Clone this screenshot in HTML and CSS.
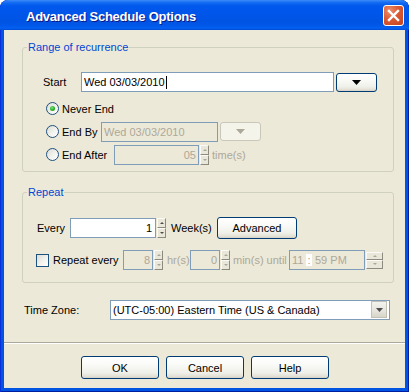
FILE: index.html
```html
<!DOCTYPE html>
<html>
<head>
<meta charset="utf-8">
<title>Advanced Schedule Options</title>
<link rel="stylesheet" href="styles.css">
</head>
<body>
<div class="window">
  <div class="titlebar">
    <span class="title">Advanced Schedule Options</span>
    <span class="close">
      <svg width="19" height="19" viewBox="0 0 19 19"><path d="M5 5 L14 14 M14 5 L5 14" stroke="#fff" stroke-width="2.4" stroke-linecap="square"/></svg>
    </span>
  </div>
  <div class="client">
    <div class="group g1">
      <span class="legend">Range of recurrence</span>
      <div class="row row-start">
        <span class="lbl w-start">Start</span>
        <div class="edit w-date">Wed 03/03/2010<span class="caret"></span></div>
        <button class="btn drop"><svg width="9" height="5" viewBox="0 0 9 5"><polygon points="0,0 9,0 4.5,5" fill="#000"/></svg></button>
      </div>
      <div class="row rrow first">
        <span class="radio checked"></span><span class="rlabel">Never End</span>
      </div>
      <div class="row rrow">
        <span class="radio"></span><span class="rlabel w-endby">End By</span>
        <div class="edit disabled w-enddate">Wed 03/03/2010</div>
        <button class="btn drop disabled"><svg width="9" height="5" viewBox="0 0 9 5"><polygon points="0,0 9,0 4.5,5" fill="#ACA899"/></svg></button>
      </div>
      <div class="row rrow">
        <span class="radio"></span><span class="rlabel w-endafter">End After</span>
        <div class="edit disabled num w-count">05</div>
        <div class="spin off"><span class="up"></span><span class="down"></span></div>
        <span class="dim times">time(s)</span>
      </div>
    </div>

    <div class="group g2">
      <span class="legend">Repeat</span>
      <div class="row row-every">
        <span class="lbl w-every">Every</span>
        <div class="edit num w-weeks">1</div>
        <div class="spin"><span class="up"></span><span class="down"></span></div>
        <span class="lbl w-weeklbl">Week(s)</span>
        <button class="btn push w-adv">Advanced</button>
      </div>
      <div class="row row-rep">
        <span class="check"></span>
        <span class="lbl w-repeat">Repeat every</span>
        <div class="edit disabled num w-small">8</div>
        <div class="spin off"><span class="up"></span><span class="down"></span></div>
        <span class="dim w-hr">hr(s)</span>
        <div class="edit disabled num w-small">0</div>
        <div class="spin off"><span class="up"></span><span class="down"></span></div>
        <span class="dim w-min">min(s) until</span>
        <div class="edit disabled w-time"><span class="t-h">11</span><span class="t-sep">:</span><span>59 PM</span></div>
        <div class="spin off big"><span class="up"></span><span class="down"></span></div>
      </div>
    </div>

    <div class="row row-tz">
      <span class="lbl w-tz">Time Zone:</span>
      <div class="edit w-select">
        <span class="sel-text">(UTC-05:00) Eastern Time (US &amp; Canada)</span>
        <span class="sel-btn"><svg width="7" height="4" viewBox="0 0 7 4"><polygon points="0,0 7,0 3.5,4" fill="#4D4D4D"/></svg></span>
      </div>
    </div>

    <div class="sep"></div>

    <div class="buttons">
      <button class="btn push w-dlg">OK</button>
      <button class="btn push w-dlg">Cancel</button>
      <button class="btn push w-dlg">Help</button>
    </div>
  </div>
</div>
</body>
</html>
```

FILE: styles.css
```css
* { box-sizing: border-box; }
html, body { margin: 0; padding: 0; background: #fff; }
body {
  width: 409px;
  height: 392px;
  font-family: "Liberation Sans", Arial, sans-serif;
  font-size: 11px;
  color: #000;
}

.window {
  width: 409px;
  height: 392px;
  background: #0054E3;
  border-radius: 8px 8px 0 0;
  display: flex;
  flex-direction: column;
  overflow: hidden;
  box-shadow: inset 1px 0 #0831D9, inset -1px 0 #001EA0, inset 0 -1px #001EA0;
}

.titlebar {
  height: 30px;
  flex: none;
  display: flex;
  align-items: center;
  padding: 3px 5px 0 26px;
  background: linear-gradient(180deg, #3E8EF6 0px, #2A7DF6 1px, #1069F0 3px, #0058EE 6px, #0055EA 14px, #0054E3 22px, #0058EA 26px, #0461F2 28px, #004CD6 30px);
  border-radius: 8px 8px 0 0;
}
.title {
  flex: 1;
  color: #fff;
  font-weight: bold;
  font-size: 13px;
  letter-spacing: -0.25px;
  line-height: 15px;
  text-shadow: 1px 1px 0 #0A1883;
}
.close {
  width: 21px;
  height: 21px;
  margin-top: -3px;
  border: 1px solid #fff;
  border-radius: 3px;
  background: radial-gradient(circle at 30% 25%, #EC8E6D 0%, #DA5A34 45%, #C2431F 100%);
  display: flex;
  align-items: center;
  justify-content: center;
}

.client {
  flex: 1;
  margin: 0 4px 4px;
  background: #ECE9D8;
  display: flex;
  flex-direction: column;
}

.group {
  position: relative;
  margin: 0 11px 0 18px;
  border: 1px solid #D0D0BF;
  border-radius: 3px;
}
.g1 { margin-top: 17px; padding-bottom: 7px; }
.g2 { margin-top: 20px; padding-bottom: 12px; }
.legend {
  position: absolute;
  left: 4px;
  top: -7px;
  padding: 0 1px;
  line-height: 13px;
  background: #ECE9D8;
  color: #0046D5;
}

.row { display: flex; align-items: center; }
.lbl, .rlabel, .dim { white-space: nowrap; flex: none; }
.dim { color: #ACA899; }

.row-start { margin-top: 24px; height: 20px; padding-left: 20px; }
.w-start { width: 38px; }
.w-date { width: 253px; }

.rrow { height: 19px; padding-left: 23px; margin-top: 4px; }
.rrow.first { margin-top: 7px; }
.rlabel { margin-left: 3px; }
.w-endby { width: 39px; }
.w-endafter { width: 52px; }
.w-enddate { width: 117px; height: 19px; }
.w-count { width: 85px; height: 19px; }
.times { margin-left: 3px; }

.row-every { margin-top: 24px; height: 22px; padding-left: 14px; }
.w-every { width: 33px; }
.w-weeks { width: 86px; }
.w-weeklbl { width: 46px; margin-left: 5px; }
.w-adv { width: 80px; height: 22px; }

.row-rep { margin-top: 11px; height: 20px; padding-left: 13px; }
.w-repeat { width: 70px; margin-left: 4px; }
.w-small { width: 30px; }
.w-hr { width: 23px; margin-left: 4px; }
.w-min { width: 56px; margin-left: 3px; }
.w-time { width: 76px; height: 18px; padding-left: 3px; }
.t-h { width: 14px; flex: none; }
.t-sep { flex: none; background: #fff; width: 6px; text-align: center; margin-right: 3px; }

.row-tz { margin-top: 17px; height: 19px; padding-left: 20px; }
.w-tz { width: 86px; }
.w-select { width: 280px; height: 19px; padding: 0 1px; }
.sel-text { flex: 1; color: #000; }
.sel-btn {
  width: 16px;
  height: 17px;
  display: flex;
  align-items: center;
  justify-content: center;
  border: 1px solid #C3C1B6;
  background: linear-gradient(180deg, #F3F2EE 0%, #E6E4DC 60%, #D7D4C8 100%);
}

.edit {
  flex: none;
  height: 20px;
  border: 1px solid #7F9DB9;
  background: #fff;
  display: flex;
  align-items: center;
  padding: 0 2px;
  white-space: nowrap;
}
.edit.num { justify-content: flex-end; padding-right: 3px; }
.edit.disabled { background: #ECE9D8; color: #ACA899; }
.edit.disabled.num { padding-right: 2px; }
.caret { width: 1px; height: 13px; background: #000; margin-left: 1px; }

.spin {
  flex: none;
  width: 9px;
  height: 20px;
  margin-left: 1px;
  display: flex;
  flex-direction: column;
}
.spin.big { width: 17px; height: 17px; }
.spin span {
  flex: 1;
  display: flex;
  align-items: center;
  justify-content: center;
  background: #E9E6DA;
  border: 1px solid;
  border-color: #FBFAF6 #8D8A7E #8D8A7E #FBFAF6;
}
.spin span::after {
  content: "";
  width: 0;
  height: 0;
  border-left: 2px solid transparent;
  border-right: 2px solid transparent;
}
.spin .up::after { border-bottom: 2px solid #4D4B45; }
.spin .down::after { border-top: 2px solid #4D4B45; }
.spin.off .up::after { border-bottom-color: #A9A69A; }
.spin.off .down::after { border-top-color: #A9A69A; }

.radio {
  flex: none;
  position: relative;
  width: 13px;
  height: 13px;
  border-radius: 50%;
  border: 1px solid #1C5180;
  background: linear-gradient(135deg, #DCDCD7 0%, #F4F4F0 60%, #fff 100%);
}
.radio.checked::after {
  content: "";
  position: absolute;
  left: 3px;
  top: 3px;
  width: 5px;
  height: 5px;
  border-radius: 50%;
  background: radial-gradient(circle at 40% 35%, #7BE37B 0%, #2DB42D 50%, #1A8F1A 100%);
}
.check {
  flex: none;
  width: 13px;
  height: 13px;
  border: 1px solid #1C5180;
  background: linear-gradient(135deg, #DCDCD7 0%, #F4F4F0 60%, #fff 100%);
}

.btn {
  flex: none;
  font: inherit;
  color: #000;
  padding: 0;
  margin: 0;
  border: 1px solid #003C74;
  border-radius: 3px;
  background: linear-gradient(180deg, #FFFFFF 0%, #FBFBF9 30%, #F0F0EA 75%, #E3E0D5 92%, #D6D0C5 100%);
  display: flex;
  align-items: center;
  justify-content: center;
}
.drop { width: 41px; height: 19px; margin-left: 1px; }
.row-start .drop { margin-left: 2px; align-self: flex-end; }
.drop.disabled { border-color: #C9C7BA; background: #F5F4EA; margin-left: 2px; }

.sep {
  height: 2px;
  margin-top: 23px;
  border-top: 1px solid #ACA899;
  border-bottom: 1px solid #fff;
}
.buttons {
  display: flex;
  justify-content: center;
  gap: 7px;
  margin-top: 12px;
  padding-left: 1px;
}
.w-dlg { width: 78px; height: 23px; }
```
